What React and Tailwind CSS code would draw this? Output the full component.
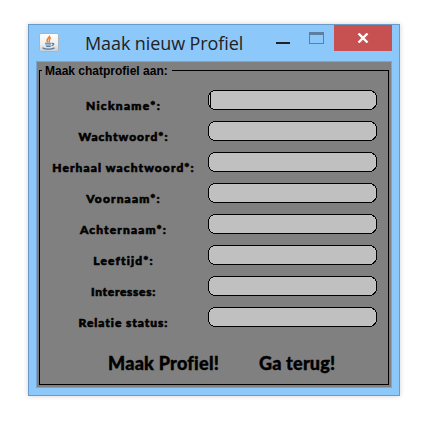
const fields = [
  { label: "Nickname*:", tracking: "tracking-[1.3px]" },
  { label: "Wachtwoord*:", tracking: "tracking-[1px]" },
  { label: "Herhaal wachtwoord*:", tracking: "tracking-[1.1px]" },
  { label: "Voornaam*:", tracking: "tracking-[1.15px]" },
  { label: "Achternaam*:", tracking: "tracking-[1.15px]" },
  { label: "Leeftijd*:", tracking: "tracking-[1.15px]" },
  { label: "Interesses:", tracking: "tracking-[0.7px]" },
  { label: "Relatie status:", tracking: "tracking-[0.95px]" },
];

function JavaIcon() {
  return (
    <svg width="20" height="19" viewBox="0 0 20 19">
      <defs>
        <linearGradient id="tile" x1="0" y1="0" x2="0" y2="1">
          <stop offset="0" stopColor="#ffffff" />
          <stop offset="0.6" stopColor="#eeeeef" />
          <stop offset="1" stopColor="#c9ced2" />
        </linearGradient>
      </defs>
      <rect x="0.5" y="0.5" width="19" height="18" rx="1.5" fill="url(#tile)" stroke="#a9b6c2" />
      <path d="M10.500 2.500C11 5 6.500 5.500 8.500 9.300M11.800 4.500C9.300 6 11.300 7 9.800 9.500" fill="none" stroke="#ee8131" strokeWidth="1.500" />
      <path d="M6 10.300H12.500M6.500 12H12M7.300 13.500H11.500M13 10.500C15.500 9.800 15.300 12 12.700 12.600" fill="none" stroke="#537b9e" strokeWidth="1.100" />
      <path d="M3.500 14.700C6 16.600 12.500 16.600 15.500 14.900" fill="none" stroke="#537b9e" strokeWidth="1.300" />
    </svg>
  );
}

function TextField({ focused }) {
  return (
    <svg className="block" width="170" height="20" viewBox="0 0 170 20" shapeRendering="crispEdges">
      <rect x="0.5" y="0.5" width="168" height="19" rx="7" fill="#c0c0c0" stroke="#000" />
      {focused && <path d="M2.500 3V17" stroke="#000" />}
    </svg>
  );
}

export default function App() {
  return (
    <div className="h-[422px] w-[438px] bg-white pt-6 pl-7">
      <div className="flex h-[372px] w-[372px] flex-col border border-[#6a9bc8] bg-[#8dc8fb] shadow-[0_0_5px_rgba(0,0,0,0.18)]">
        <header className="flex h-9 items-start pl-[10px]">
          <div className="mt-[8px]"><JavaIcon /></div>
          <h1 className="mt-[4px] ml-[26px] w-[190px] whitespace-nowrap font-['Open_Sans',sans-serif] text-[18px] leading-[28px] tracking-[-0.1px] text-[#222]">Maak nieuw Profiel</h1>
          <div className="mt-[17px] ml-px h-[2px] w-[14px] bg-[#222]" />
          <div className="mt-[7px] ml-[19px] h-3 w-[15px] border border-t-[3px] border-[#5c7fa0]" />
          <button className="ml-[10px] flex h-[26px] w-[58px] items-center justify-center bg-[#c75050]">
            <svg width="12" height="10" viewBox="0 0 12 10">
              <path d="M1.500 0.500L10.500 9.500M10.500 0.500L1.500 9.500" stroke="#fff" strokeWidth="2.400" />
            </svg>
          </button>
        </header>
        <main className="ml-[7px] h-[327px] w-[356px] border border-[#77a6d2] bg-[#808080] pt-[2px] pl-[2px]">
          <fieldset className="flex h-[321px] w-[350px] min-w-0 flex-col border border-black pt-[18px]">
            <legend className="-mb-[5px] ml-[2px] h-[13px] pt-px pr-[4px] pl-[3px] font-['Liberation_Sans',sans-serif] text-[12px] leading-[13px] font-bold whitespace-nowrap">Maak chatprofiel aan:</legend>
            <div className="flex flex-col gap-[11px]">
              {fields.map(({ label, tracking }, i) => (
                <div key={label} className="flex h-5">
                  <div className={`w-[167px] pt-[9px] text-center font-[Lato,sans-serif] text-[12px] leading-[14px] font-black whitespace-nowrap text-black [-webkit-text-stroke:0.6px_black] ${tracking}`}>{label}</div>
                  <div className="ml-px"><TextField focused={i === 0} /></div>
                </div>
              ))}
            </div>
            <div className="mt-[23px] flex font-[Lato,sans-serif] text-[18px] leading-[26px] font-black whitespace-nowrap text-black [-webkit-text-stroke:0.4px_black]">
              <button className="ml-[68px] w-[151px] text-left tracking-[0.25px]">Maak Profiel!</button>
              <button className="tracking-[0.2px]">Ga terug!</button>
            </div>
          </fieldset>
        </main>
      </div>
    </div>
  );
}
